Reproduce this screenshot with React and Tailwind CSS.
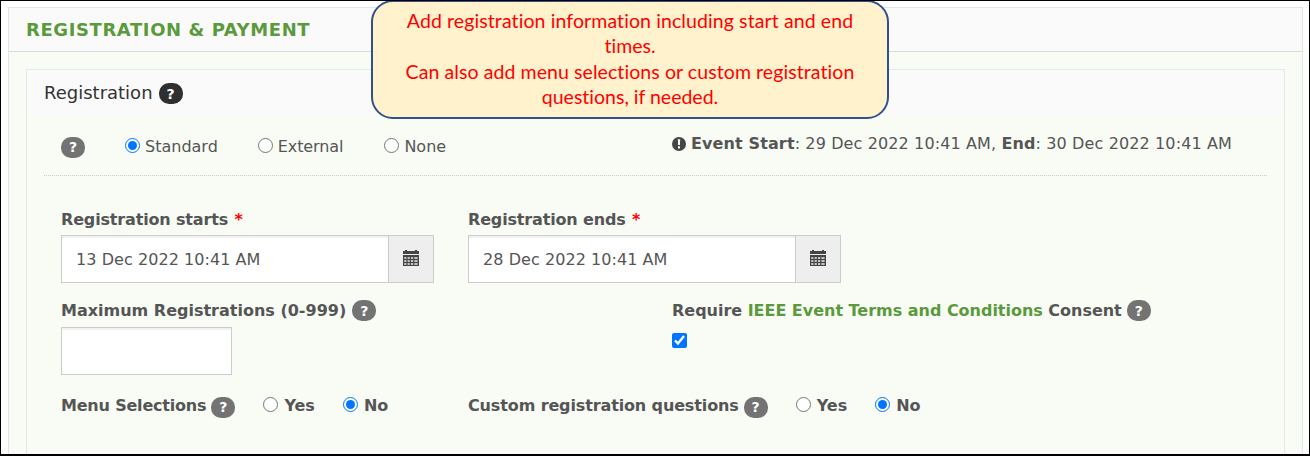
import { useState } from "react";

function Help({ dark, className = "" }) {
  return (
    <span
      className={`flex h-[21px] w-6 shrink-0 items-center justify-center rounded-[10px] text-[14px] leading-none font-bold text-white ${
        dark ? "bg-[#2f2f2f]" : "bg-[#737373]"
      } ${className}`}
    >
      ?
    </span>
  );
}

function Radio({ name, label, checked, onChange, className }) {
  return (
    <label className={`flex items-center ${className}`}>
      <input
        type="radio"
        name={name}
        checked={checked}
        onChange={onChange}
        className="mb-[3px] h-[15px] w-[15px] shrink-0"
      />
      {label}
    </label>
  );
}

function CalendarIcon() {
  return (
    <svg width="16" height="16" viewBox="0 0 16 16" fill="#454545" className="mb-[2px]">
      <path d="M0 1h2V0h2v1h8V0h2v1h2v3H0z" />
      <path
        fillRule="evenodd"
        d="M0 5h16v11H0zM1.2 7.2v1.6h2.2V7.2zM4.6 7.2v1.6h2.2V7.2zM8 7.2v1.6h2.2V7.2zM11.4 7.2v1.6h3.2V7.2zM1.2 10.2v1.6h2.2v-1.6zM4.6 10.2v1.6h2.2v-1.6zM8 10.2v1.6h2.2v-1.6zM11.4 10.2v1.6h3.2v-1.6zM1.2 13.2v1.6h2.2v-1.6zM4.6 13.2v1.6h2.2v-1.6zM8 13.2v1.6h2.2v-1.6zM11.4 13.2v1.6h3.2v-1.6z"
      />
    </svg>
  );
}

function DateField({ label, value, className }) {
  return (
    <div className={className}>
      <div className="h-[25px] text-[16px] leading-[20px] font-bold tracking-[-0.16px]">
        {label} <span className="ml-[1px] text-[#ff0000]">*</span>
      </div>
      <div className="flex h-12 w-[373px] border border-[#cccccc] bg-white">
        <div className="flex flex-1 items-center pt-[2px] pl-[14px] tracking-[0.06px] shadow-[inset_0_2px_1px_rgba(0,0,0,0.06)]">
          {value}
        </div>
        <div className="flex w-[45px] items-center justify-center border-l border-[#cccccc] bg-[#eeeeee]">
          <CalendarIcon />
        </div>
      </div>
    </div>
  );
}

export default function App() {
  const [type, setType] = useState("Standard");
  const [menu, setMenu] = useState("No");
  const [questions, setQuestions] = useState("No");
  const [consent, setConsent] = useState(true);

  return (
    <div className="relative h-[456px] w-[1310px] overflow-hidden border border-b-2 border-black bg-white pt-[6px] pr-[6px] pl-[7px] font-['DejaVu_Sans',Verdana,sans-serif] text-[16px] whitespace-nowrap text-[#555555]">
      <div className="h-[460px] border border-[#dde8e8] bg-[#f8fcf5]">
        <div className="flex h-[44px] items-center border-b border-[#d8dada] bg-[#fafafa] pl-[17px] text-[18px] font-bold tracking-[0.59px] text-[#5a9a3c]">
          REGISTRATION & PAYMENT
        </div>

        {/* REGISTRATION */}
        <div className="mx-[17px] mt-[17px] h-[400px] border border-[#e0ebe8]">
          <div className="flex h-[46px] items-center gap-[6px] bg-[#fafafa] pl-[17px] text-[18px] text-[#333333]">
            <span className="mb-[2px]">Registration</span>
            <Help dark className="mt-[1px]" />
          </div>

          <div className="mx-[17px] flex h-[60px] border-b border-dotted border-[#c5cfc0] pl-[17px]">
            <div className="flex h-[62px] w-[611px] items-center">
              <Help />
              <Radio
                name="type"
                label="Standard"
                checked={type === "Standard"}
                onChange={() => setType("Standard")}
                className="ml-10 gap-[5px]"
              />
              <Radio
                name="type"
                label="External"
                checked={type === "External"}
                onChange={() => setType("External")}
                className="ml-10 gap-[5px] tracking-[-0.1px]"
              />
              <Radio
                name="type"
                label="None"
                checked={type === "None"}
                onChange={() => setType("None")}
                className="ml-[41px] gap-[5px]"
              />
            </div>
            <div className="flex h-[55px] items-center">
              <svg width="14" height="14" viewBox="0 0 14 14" className="mr-[5px]">
                <circle cx="7" cy="7" r="7" fill="#454545" />
                <path d="M5.8 2.3h2.4L7.9 8H6.1zM6 9.3h2v2.2H6z" fill="#fff" />
              </svg>
              <span className="tracking-[0.12px]">
                <b>Event Start</b>: 29 Dec 2022 10:41 AM, <b>End</b>: 30 Dec 2022 10:41 AM
              </span>
            </div>
          </div>

          <div className="mt-[34px] flex pl-[34px]">
            <DateField label="Registration starts" value="13 Dec 2022 10:41 AM" className="w-[407px]" />
            <DateField label="Registration ends" value="28 Dec 2022 10:41 AM" />
          </div>

          <div className="mt-[17px] flex pl-[34px] font-bold">
            <div className="w-[611px]">
              <div className="flex h-[21px] items-center gap-[5px]">
                <span>Maximum Registrations (0-999)</span>
                <Help className="ml-[1px]" />
              </div>
              <input className="mt-[6px] block h-12 w-[171px] border border-[#cccccc] bg-white px-3 shadow-[inset_0_2px_1px_rgba(0,0,0,0.06)]" />
            </div>
            <div>
              <div className="flex h-[21px] items-center gap-[5px] tracking-[-0.02px]">
                <span>
                  Require <span className="text-[#5a9a3c]">IEEE Event Terms and Conditions</span> Consent
                </span>
                <Help />
              </div>
              <input
                type="checkbox"
                checked={consent}
                onChange={() => setConsent(!consent)}
                className="mt-[12px] block h-[15px] w-[15px]"
              />
            </div>
          </div>

          <div className="mt-[20px] flex pl-[34px] font-bold">
            <div className="flex h-[21px] w-[407px] items-center">
              <span className="mr-[5px] tracking-[-0.2px]">Menu Selections</span>
              <Help className="mt-[3px]" />
              {["Yes", "No"].map((v) => (
                <Radio
                  key={v}
                  name="menu"
                  label={v}
                  checked={menu === v}
                  onChange={() => setMenu(v)}
                  className="ml-[28px] gap-[6px]"
                />
              ))}
            </div>
            <div className="flex h-[21px] items-center">
              <span className="mr-[5px] tracking-[-0.13px]">Custom registration questions</span>
              <Help className="mt-[3px]" />
              {["Yes", "No"].map((v) => (
                <Radio
                  key={v}
                  name="questions"
                  label={v}
                  checked={questions === v}
                  onChange={() => setQuestions(v)}
                  className="ml-[28px] gap-[6px]"
                />
              ))}
            </div>
          </div>
        </div>
      </div>

      {/* callout over the form */}
      <div className="absolute -top-[1px] left-[370px] h-[119px] w-[518px] rounded-[22px] border-2 border-[#2f528f] bg-[#fff2cc] pt-[6px] text-center font-['Lato',sans-serif] text-[19.5px] leading-[25.4px] text-[#ff0000] [font-variant-ligatures:none]">
        <div className="tracking-[0.1px]">Add registration information including start and end</div>
        <div>times.</div>
        <div className="tracking-[0.08px]">Can also add menu selections or custom registration</div>
        <div>questions, if needed.</div>
      </div>
    </div>
  );
}
